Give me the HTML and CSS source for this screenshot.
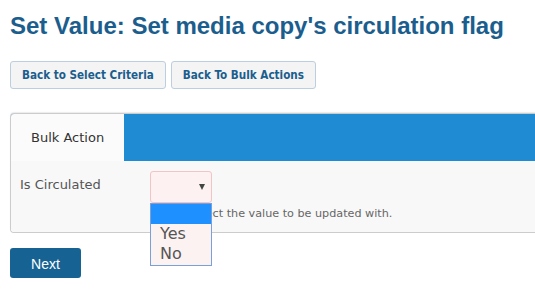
FILE: index.html
```html
<!DOCTYPE html>
<html>
<head>
<meta charset="utf-8">
<link rel="stylesheet" href="styles.css">
</head>
<body>
<h1 class="title">Set Value: Set media copy's circulation flag</h1>
<div class="actions">
  <button class="btn-light">Back to Select Criteria</button>
  <button class="btn-light">Back To Bulk Actions</button>
</div>
<div class="panel">
  <div class="tabs">
    <div class="tab">Bulk Action</div>
  </div>
  <div class="panel-body">
    <div class="label">Is Circulated</div>
    <div class="field">
      <div class="select"><span class="arrow"></span>
        <div class="dropdown">
          <div class="option selected">&nbsp;</div>
          <div class="option">Yes</div>
          <div class="option">No</div>
        </div>
      </div>
    </div>
    <div class="help">Please select the value to be updated with.</div>
  </div>
</div>
<button class="btn-primary">Next</button>
</body>
</html>
```
FILE: styles.css
```css
html, body {
  overflow: hidden;
}
body {
  margin: 0;
  padding: 0 10px;
  background: #ffffff;
  font-family: "DejaVu Sans", Verdana, sans-serif;
}
.title {
  margin: 12px 0 0;
  font: 700 24px/28px "Liberation Sans", Arial, sans-serif;
  color: #1b5e8e;
}
.actions {
  display: flex;
  gap: 5px;
  margin-top: 21px;
}
.btn-light {
  height: 28px;
  padding: 0 11px;
  border: 1px solid #bccfe0;
  border-radius: 3px;
  background: #f4f4f4;
  color: #1b5e8e;
  font: 700 11.6px/26px "DejaVu Sans Condensed", "DejaVu Sans", sans-serif;
  cursor: pointer;
}
.panel {
  margin-top: 24px;
  margin-right: -10px;
  border: 1px solid #cccccc;
  border-right: none;
  border-radius: 4px 0 0 4px;
  box-shadow: 0 -1px 1px rgba(0,0,0,0.08);
}
.tabs {
  display: flex;
  background: #1e8bd3;
  border-radius: 3px 0 0 0;
}
.tab {
  height: 47px;
  line-height: 47px;
  padding: 0 20px;
  background: #fbfbfb;
  border-radius: 3px 0 0 0;
  color: #333333;
  font-size: 13px;
}
.panel-body {
  display: grid;
  grid-template-columns: 130px 1fr;
  padding: 10px 10px 11px 9px;
  background: #f8f8f8;
  border-radius: 0 0 0 3px;
}
.label {
  padding-top: 6px;
  font-size: 13px;
  line-height: 15px;
  color: #555555;
}
.field {
  display: flex;
}
.select {
  position: relative;
  box-sizing: border-box;
  width: 62px;
  height: 32px;
  display: flex;
  align-items: center;
  justify-content: flex-end;
  padding-right: 6px;
  border: 1px solid #f3c4c4;
  border-radius: 3px;
  background: #fdf1f1;
}
.arrow {
  width: 0;
  height: 0;
  margin-top: -1px;
  border-left: 3px solid transparent;
  border-right: 3px solid transparent;
  border-top: 6px solid #444444;
}
.dropdown {
  position: absolute;
  left: -1px;
  top: calc(100% + 1px);
  box-sizing: border-box;
  width: 62px;
  padding-bottom: 1px;
  border: 1px solid #7aa0da;
  background: #fdf2f2;
}
.option {
  height: 20px;
  line-height: 20px;
  padding-left: 9px;
  font-size: 16px;
  color: #555555;
}
.option.selected {
  background: #1e90ff;
}
.help {
  grid-column: 2;
  margin-top: 4px;
  font-size: 11.2px;
  line-height: 14px;
  color: #666666;
}
.btn-primary {
  display: block;
  margin-top: 15px;
  width: 71px;
  height: 30px;
  border: none;
  border-radius: 3px;
  background: #166393;
  color: #ffffff;
  font: 14px/30px "Liberation Sans", Arial, sans-serif;
}
```
